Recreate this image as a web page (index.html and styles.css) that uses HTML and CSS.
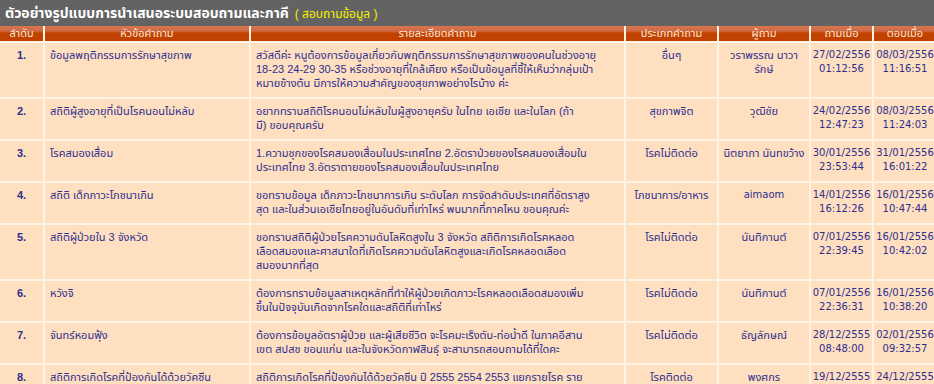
FILE: index.html
```html
<!DOCTYPE html>
<html lang="th">
<head>
<meta charset="utf-8">
<title>ตัวอย่างรูปแบบการนำเสนอระบบสอบถามและภาคี</title>
<link rel="stylesheet" href="styles.css">
</head>
<body>
<div class="titlebar">
  <span class="title-main">ตัวอย่างรูปแบบการนำเสนอระบบสอบถามและภาคี</span>
  <span class="title-sub">( สอบถามข้อมูล )</span>
</div>
<div class="wrap">
<table class="qa">
  <thead>
    <tr>
      <th class="c-no">ลำดับ</th>
      <th class="c-topic">หัวข้อคำถาม</th>
      <th class="c-detail">รายละเอียดคำถาม</th>
      <th class="c-type">ประเภทคำถาม</th>
      <th class="c-who">ผู้ถาม</th>
      <th class="c-asked">ถามเมื่อ</th>
      <th class="c-ans">ตอบเมื่อ</th>
    </tr>
  </thead>
  <tbody>
    <tr class="r3">
      <td class="no">1.</td>
      <td>ข้อมูลพฤติกรรมการรักษาสุขภาพ</td>
      <td>สวัสดีค่ะ หนูต้องการข้อมูลเกี่ยวกับพฤติกรรมการรักษาสุขภาพของคนในช่วงอายุ<br>18-23 24-29 30-35 หรือช่วงอายุที่ใกล้เคียง หรือเป็นข้อมูลที่ชี้ให้เห็นว่ากลุ่มเป้า<br>หมายข้างต้น มีการให้ความสำคัญของสุขภาพอย่างไรบ้าง ค่ะ</td>
      <td class="ctr">อื่นๆ</td>
      <td class="ctr">วราพรรณ นาวา<br>รักษ์</td>
      <td class="ctr dt">27/02/2556<br>01:12:56</td>
      <td class="ctr dt">08/03/2556<br>11:16:51</td>
    </tr>
    <tr>
      <td class="no">2.</td>
      <td>สถิติผู้สูงอายุที่เป็นโรคนอนไม่หลับ</td>
      <td>อยากทราบสถิติโรคนอนไม่หลับในผู้สูงอายุครับ ในไทย เอเชีย และในโลก (ถ้า<br>มี) ขอบคุณครับ</td>
      <td class="ctr">สุขภาพจิต</td>
      <td class="ctr">วุฒิชัย</td>
      <td class="ctr dt">24/02/2556<br>12:47:23</td>
      <td class="ctr dt">08/03/2556<br>11:24:03</td>
    </tr>
    <tr>
      <td class="no">3.</td>
      <td>โรคสมองเสื่อม</td>
      <td>1.ความชุกของโรคสมองเสื่อมในประเทศไทย 2.อัตราป่วยของโรคสมองเสื่อมใน<br>ประเทศไทย 3.อัตราตายของโรคสมองเสื่อมในประเทศไทย</td>
      <td class="ctr">โรคไม่ติดต่อ</td>
      <td class="ctr">นิตยาภา นันทขว้าง</td>
      <td class="ctr dt">30/01/2556<br>23:53:44</td>
      <td class="ctr dt">31/01/2556<br>16:01:22</td>
    </tr>
    <tr>
      <td class="no">4.</td>
      <td>สถิติ เด็กภาวะโภชนาเกิน</td>
      <td>ขอทราบข้อมูล เด็กภาวะโภชนาการเกิน ระดับโลก การจัดลำดับประเทศที่อัตราสูง<br>สุด และในส่วนเอเชียไทยอยู่ในอันดับที่เท่าไหร่ พบมากที่ภาคไหน ขอบคุณค่ะ</td>
      <td class="ctr">โภชนาการ/อาหาร</td>
      <td class="ctr latin">aimaom</td>
      <td class="ctr dt">14/01/2556<br>16:12:26</td>
      <td class="ctr dt">16/01/2556<br>10:47:44</td>
    </tr>
    <tr class="r3">
      <td class="no">5.</td>
      <td>สถิติผู้ป่วยใน 3 จังหวัด</td>
      <td>ขอทราบสถิติผู้ป่วยโรคความดันโลหิตสูงใน 3 จังหวัด สถิติการเกิดโรคหลอด<br>เลือดสมองและศาสนาใดที่เกิดโรคความดันโลหิตสูงและเกิดโรคหลอดเลือด<br>สมองมากที่สุด</td>
      <td class="ctr">โรคไม่ติดต่อ</td>
      <td class="ctr">นันทิกานต์</td>
      <td class="ctr dt">07/01/2556<br>22:39:45</td>
      <td class="ctr dt">16/01/2556<br>10:42:02</td>
    </tr>
    <tr>
      <td class="no">6.</td>
      <td>หวังจิ</td>
      <td>ต้องการทราบข้อมูลสาเหตุหลักที่ทำให้ผู้ป่วยเกิดภาวะโรคหลอดเลือดสมองเพิ่ม<br>ขึ้นในปัจจุบันเกิดจากโรคใดและสถิติที่เท่าไหร่</td>
      <td class="ctr">โรคไม่ติดต่อ</td>
      <td class="ctr">นันทิกานต์</td>
      <td class="ctr dt">07/01/2556<br>22:36:31</td>
      <td class="ctr dt">16/01/2556<br>10:38:20</td>
    </tr>
    <tr>
      <td class="no">7.</td>
      <td>จันทร์หอมฟุ้ง</td>
      <td>ต้องการข้อมูลอัตราผู้ป่วย และผู้เสียชีวิต จะโรคมะเร็งตับ-ท่อน้ำดี ในภาคอีสาน<br>เขต สปสช ขอนแก่น และในจังหวัดกาฬสินธุ์ จะสามารถสอบถามได้ที่ใดคะ</td>
      <td class="ctr">โรคไม่ติดต่อ</td>
      <td class="ctr">ธัญลักษณ์</td>
      <td class="ctr dt">28/12/2555<br>08:48:00</td>
      <td class="ctr dt">02/01/2556<br>09:32:57</td>
    </tr>
    <tr>
      <td class="no">8.</td>
      <td>สถิติการเกิดโรคที่ป้องกันได้ด้วยวัคซีน</td>
      <td>สถิติการเกิดโรคที่ป้องกันได้ด้วยวัคซีน ปี 2555 2554 2553 แยกรายโรค ราย<br>จังหวัด ขอบคุณครับ</td>
      <td class="ctr">โรคติดต่อ</td>
      <td class="ctr">พงศกร</td>
      <td class="ctr dt">19/12/2555<br>10:21:08</td>
      <td class="ctr dt">24/12/2555<br>14:05:33</td>
    </tr>
  </tbody>
</table>
</div>
</body>
</html>
```
FILE: styles.css
```css
html, body {
  margin: 0;
  padding: 0;
}
body {
  background: #fff3e6;
  font-family: Tahoma, "Liberation Sans", "Noto Sans Thai", "Noto Sans", sans-serif;
  font-size: 11px;
  color: #2e2e8f;
  overflow: hidden;
  width: 934px;
  height: 384px;
}
.titlebar {
  background: #636363;
  height: 26px;
  box-sizing: border-box;
  padding: 4px 0 0 5px;
  white-space: nowrap;
  font-size: 14px;
  line-height: 18px;
}
.title-main {
  color: #ffffff;
  font-weight: bold;
}
.title-sub {
  color: #f6f200;
  font-weight: normal;
  font-size: 12px;
  margin-left: 2px;
}
.wrap {
  overflow: hidden;
}
.qa {
  table-layout: fixed;
  border-collapse: separate;
  border-spacing: 2px;
  margin: -2px 0 0 -2px;
  width: 940px;
}
.qa th {
  background: linear-gradient(#d8764e 0, #d06a44 5px, #c24200 7px, #c04000 100%);
  color: #fbe6d6;
  font-weight: normal;
  height: 15px;
  padding: 0;
  line-height: 15px;
  text-align: center;
  white-space: nowrap;
  overflow: hidden;
}
.c-no { width: 43px; }
.c-topic { width: 204px; }
.c-detail { width: 373px; }
.c-type { width: 91px; }
.c-who { width: 90px; }
.c-asked { width: 61px; }
.c-ans { width: 62px; }
.qa td {
  background: #fedfc0;
  vertical-align: top;
  padding: 5px 4px 7px 5px;
  line-height: 14px;
  height: 28px;
  box-sizing: content-box;
  overflow: hidden;
}
.qa tr.r3 td {
  height: 42px;
}
.qa td.no {
  text-align: center;
  font-weight: bold;
  padding-left: 0;
  padding-right: 0;
}
.qa td.ctr {
  text-align: center;
  padding-left: 0;
  padding-right: 0;
}
.qa td.dt {
  font-family: "DejaVu Sans", Verdana, sans-serif;
  font-size: 10px;
  white-space: nowrap;
}
.qa td.latin {
  font-family: "DejaVu Sans", Verdana, sans-serif;
  font-size: 10px;
}
```
